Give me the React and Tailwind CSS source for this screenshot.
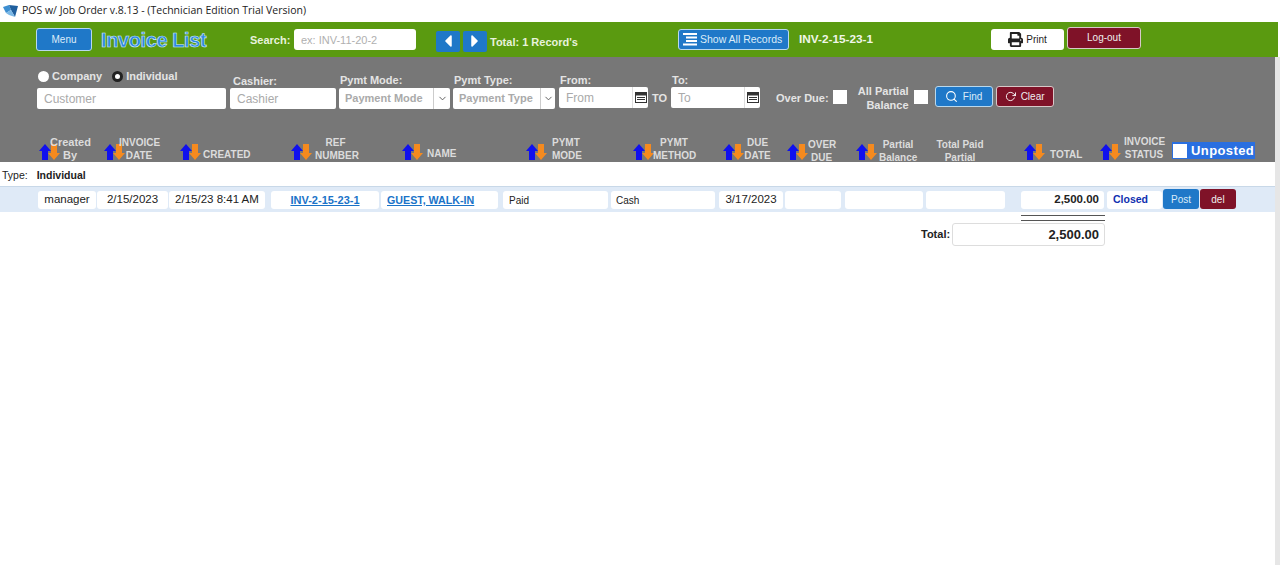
import { FiSearch, FiRotateCw } from "react-icons/fi";
import { FaPrint, FaCaretLeft, FaCaretRight } from "react-icons/fa";
import { LuChevronDown } from "react-icons/lu";

function SortArrows() {
    return (
        <svg width="21" height="17" viewBox="0 0 21 17" className="shrink-0 mb-[1px]">
            <path d="M6 0 L12 7 H9 V16 H3 V7 H0 Z" fill="#1010ee" />
            <path d="M12 0 H18 V9 H21 L15 16 L9 9 H12 Z" fill="#f58a1f" />
        </svg>
    );
}

function Calendar() {
    return (
        <svg width="12" height="11" viewBox="0 0 12 11">
            <rect x="0.5" y="0.5" width="11" height="10" fill="none" stroke="#333" />
            <rect x="0.5" y="0.5" width="11" height="3" fill="#333" />
            <path d="M2 5.5 H10 M2 7.5 H10" stroke="#333" />
        </svg>
    );
}

function ListIcon() {
    return (
        <svg width="15" height="13" viewBox="0 0 15 13" className="shrink-0">
            <path d="M0 0 H14 V2 H0 Z M3 3.5 H14 V5.5 H3 Z M3 7 H14 V9 H3 Z M0 10.5 H14 V12.5 H0 Z" fill="#fff" />
        </svg>
    );
}

function Cell({ w, ml = "ml-0", className = "", children }) {
    return <div className={`${w} ${ml} h-[18px] mt-[1px] bg-white rounded-[3px] flex items-center shrink-0 ${className}`}>{children}</div>;
}

function HeadCol({ w, arrows = true, children }) {
    return (
        <div className={`${w} h-full flex items-end shrink-0`}>
            {arrows && <SortArrows />}
            {children}
        </div>
    );
}

export default function App() {
    return (
        <div className="w-[1280px] h-[565px] overflow-hidden bg-white text-[11px] font-['Liberation_Sans',Arial,sans-serif]">
            <div className="h-[22px] flex items-center pl-[3px] text-[10.5px] text-[#222] font-['Open_Sans',sans-serif]">
                <svg width="15" height="13" viewBox="0 0 15 13" className="mr-[4px]">
                    <path d="M0 2 L6 0 L8 5 L3 8 Z" fill="#3d8fd1" />
                    <path d="M6 0 L15 1 L12 12 L8 5 Z" fill="#1f5f9e" />
                    <path d="M3 8 L8 5 L12 12 L6 10 Z" fill="#7ab8e6" />
                </svg>
                POS w/ Job Order v.8.13 - (Technician Edition Trial Version)
            </div>

            <div className="w-[1278px] h-[35px] bg-[#5a9a10] flex items-center">
                <button className="ml-[36px] w-[56px] h-[23px] rounded-[3px] bg-[#1f78c8] border border-[#b8d8ee] text-[10px] text-[#dcecf8]">Menu</button>
                <div className="ml-[9px] w-[107px] text-[20px] tracking-[-0.4px] leading-none font-bold text-[#2a86e0] [-webkit-text-stroke:0.6px_#d8ecff] whitespace-nowrap">Invoice List</div>
                <div className="ml-[42px] w-[44px] font-bold text-[#e8f2dc] mt-[1px]">Search:</div>
                <input placeholder="ex: INV-11-20-2" className="w-[122px] h-[21px] bg-white rounded-[3px] px-[7px] text-[11px] placeholder-[#b0b0b0]" />
                <button className="ml-[20px] mt-[3px] w-[24px] h-[21px] rounded-[2px] bg-[#1f78c8] flex items-center justify-center text-white text-[20px]"><FaCaretLeft /></button>
                <button className="ml-[3px] mt-[3px] w-[24px] h-[21px] rounded-[2px] bg-[#1f78c8] flex items-center justify-center text-white text-[20px]"><FaCaretRight /></button>
                <div className="ml-[3px] mt-[5px] w-[188px] font-bold text-[#e8f2dc]">Total: 1 Record's</div>
                <button className="w-[111px] h-[21px] rounded-[3px] bg-[#1f78c8] border border-[#b8d8ee] flex items-center pl-[4px] gap-[2px] text-[10.5px] text-[#dcecf8] whitespace-nowrap"><ListIcon />Show All Records</button>
                <div className="ml-[10px] mt-[1px] w-[192px] font-bold text-[#f0f6e8] text-[11.8px]">INV-2-15-23-1</div>
                <button className="w-[73px] h-[21px] -mt-[1px] rounded-[3px] bg-white flex items-center justify-center gap-[3px] text-[10px] text-[#222]"><FaPrint className="text-[15px] text-[#222]" />Print</button>
                <button className="ml-[3px] w-[74px] h-[22px] -mt-[4px] rounded-[3px] bg-[#7f1228] border border-[#d8c8c8] text-[10px] text-[#eee]">Log-out</button>
            </div>

            <div className="flex h-[508px]">
                <div className="w-[1275px] shrink-0">
                    <div className="h-[105px] bg-[#777777] flex flex-col text-[#e4e4e4] font-bold">
                        <div className="h-[56px] flex items-start">
                            <div className="ml-[37px] mt-[12px] w-[189px] flex flex-col shrink-0">
                                <div className="h-[14px] flex items-center pl-[1px] text-[11px]">
                                    <span className="w-[11px] h-[11px] rounded-full bg-white mr-[3px]"></span>
                                    Company
                                    <span className="ml-[10px] w-[11px] h-[11px] rounded-full bg-white border-[3px] border-[#222] mr-[3px]"></span>
                                    Individual
                                </div>
                                <input placeholder="Customer" className="mt-[5px] w-[189px] h-[21px] bg-white rounded-[2px] px-[7px] text-[12px] font-normal placeholder-[#aaa]" />
                            </div>
                            <div className="ml-[4px] mt-[18px] w-[106px] shrink-0">
                                <div className="h-[13px] leading-[13px] pl-[3px]">Cashier:</div>
                                <input placeholder="Cashier" className="w-[106px] h-[21px] bg-white rounded-[2px] px-[7px] text-[12px] font-normal placeholder-[#aaa]" />
                            </div>
                            <div className="ml-[3px] mt-[17px] w-[111px] shrink-0">
                                <div className="h-[14px] leading-[12px] pl-[1px]">Pymt Mode:</div>
                                <div className="h-[21px] bg-white rounded-[2px] flex items-center text-[#aaa] text-[11px] pl-[6px]">
                                    <span className="flex-1 whitespace-nowrap">Payment Mode</span>
                                    <span className="w-[17px] h-full border-l border-[#ccc] flex items-center justify-center text-[#555]"><LuChevronDown /></span>
                                </div>
                            </div>
                            <div className="ml-[3px] mt-[17px] w-[102px] shrink-0">
                                <div className="h-[14px] leading-[12px] pl-[1px]">Pymt Type:</div>
                                <div className="h-[21px] bg-white rounded-[2px] flex items-center text-[#aaa] text-[11px] pl-[6px]">
                                    <span className="flex-1 whitespace-nowrap">Payment Type</span>
                                    <span className="w-[15px] h-full border-l border-[#ccc] flex items-center justify-center text-[#555]"><LuChevronDown /></span>
                                </div>
                            </div>
                            <div className="ml-[4px] mt-[17px] w-[89px] shrink-0">
                                <div className="h-[13px] leading-[12px] pl-[1px]">From:</div>
                                <div className="h-[21px] bg-white rounded-[2px] flex items-center text-[#aaa] text-[12px] font-normal pl-[7px]">
                                    <span className="flex-1">From</span>
                                    <span className="w-[16px] h-full border-l border-[#ddd] flex items-center justify-center"><Calendar /></span>
                                </div>
                            </div>
                            <div className="w-[23px] mt-[35px] text-center shrink-0 leading-[12px]">TO</div>
                            <div className="mt-[17px] w-[89px] shrink-0">
                                <div className="h-[13px] leading-[12px] pl-[1px]">To:</div>
                                <div className="h-[21px] bg-white rounded-[2px] flex items-center text-[#aaa] text-[12px] font-normal pl-[7px]">
                                    <span className="flex-1">To</span>
                                    <span className="w-[16px] h-full border-l border-[#ddd] flex items-center justify-center"><Calendar /></span>
                                </div>
                            </div>
                            <div className="ml-[16px] mt-[35px] leading-[12px] whitespace-nowrap shrink-0">Over Due:</div>
                            <span className="ml-[4px] mt-[33px] w-[14px] h-[14px] bg-white shrink-0"></span>
                            <div className="ml-[10px] mt-[27px] w-[52px] leading-[14px] text-right whitespace-nowrap shrink-0">All Partial<br />Balance</div>
                            <span className="ml-[5px] mt-[33px] w-[14px] h-[14px] bg-white shrink-0"></span>
                            <button className="ml-[7px] mt-[29px] w-[58px] h-[21px] rounded-[3px] bg-[#1f78c8] border border-[#b8d8ee] flex items-center justify-center gap-[5px] text-[10px] font-normal text-[#dcecf8]"><FiSearch className="text-[13px] text-white" />Find</button>
                            <button className="ml-[3px] mt-[29px] w-[58px] h-[21px] rounded-[3px] bg-[#7f1228] border border-[#d8c8c8] flex items-center justify-center gap-[5px] text-[10px] font-normal text-[#eee]"><FiRotateCw className="text-[11px] text-white" />Clear</button>
                        </div>

                        <div className="h-[49px] pl-[39px] flex items-end text-[10px] leading-[13px] text-[#dcdcdc] whitespace-nowrap">
                            <HeadCol w="w-[65px]"><div className="-ml-[10px] w-[40px] text-center text-[11px]">Created<br />By</div></HeadCol>
                            <HeadCol w="w-[76px]"><div className="-ml-[6px] w-[40px] text-center">INVOICE<br />DATE</div></HeadCol>
                            <HeadCol w="w-[111px]"><div className="ml-[2px] pb-[1px]">CREATED</div></HeadCol>
                            <HeadCol w="w-[111px]"><div className="ml-[3px] w-[41px] text-center">REF<br />NUMBER</div></HeadCol>
                            <HeadCol w="w-[124px]"><div className="ml-[4px] pb-[2px]">NAME</div></HeadCol>
                            <HeadCol w="w-[107px]"><div className="ml-[5px]">PYMT<br />MODE</div></HeadCol>
                            <HeadCol w="w-[90px]"><div className="-ml-[1px] w-[42px] text-center">PYMT<br />METHOD</div></HeadCol>
                            <HeadCol w="w-[64px]"><div className="w-[27px] text-center">DUE<br />DATE</div></HeadCol>
                            <HeadCol w="w-[69px]"><div className="w-[27px] text-center -mb-[2px]">OVER<br />DUE</div></HeadCol>
                            <HeadCol w="w-[79px]"><div className="ml-[2px] w-[38px] text-center -mb-[2px]">Partial<br />Balance</div></HeadCol>
                            <HeadCol w="w-[89px]" arrows={false}><div className="w-[50px] text-center -mb-[2px]">Total Paid<br />Partial</div></HeadCol>
                            <HeadCol w="w-[76px]"><div className="ml-[5px] pb-[1px]">TOTAL</div></HeadCol>
                            <HeadCol w="w-[72px]"><div className="ml-[3px] w-[40px] text-center pb-[1px]">INVOICE<br />STATUS</div></HeadCol>
                            <div className="mb-[3px] w-[83px] h-[17px] bg-[#2a6fe0] flex items-center pl-[1px] text-[13px] tracking-[0.4px] text-white shrink-0">
                                <span className="w-[14px] h-[14px] bg-white mr-[4px]"></span>Unposted
                            </div>
                        </div>
                    </div>

                    <div className="h-[25px] flex items-center pl-[2px] pt-[3px] text-[10.5px] text-[#222] border-b border-[#c8d8e8]">
                        Type:<span className="ml-[9px] font-bold">Individual</span>
                    </div>

                    <div className="h-[25px] bg-[#dfeaf7] flex items-center text-[11.5px] text-[#222]">
                        <Cell w="w-[58px]" ml="ml-[38px]" className="justify-center">manager</Cell>
                        <Cell w="w-[71px]" ml="ml-[1px]" className="justify-center">2/15/2023</Cell>
                        <Cell w="w-[96px]" ml="ml-[1px]" className="justify-center">2/15/23 8:41 AM</Cell>
                        <Cell w="w-[108px]" ml="ml-[6px]" className="justify-center font-bold text-[11px] text-[#1a73c8] underline">INV-2-15-23-1</Cell>
                        <Cell w="w-[117px]" ml="ml-[2px]" className="pl-[6px] font-bold text-[10.7px] text-[#1a73c8] underline">GUEST, WALK-IN</Cell>
                        <Cell w="w-[105px]" ml="ml-[5px]" className="pl-[6px] text-[10px]">Paid</Cell>
                        <Cell w="w-[104px]" ml="ml-[3px]" className="pl-[5px] text-[10px]">Cash</Cell>
                        <Cell w="w-[64px]" ml="ml-[4px]" className="justify-center">3/17/2023</Cell>
                        <Cell w="w-[56px]" ml="ml-[2px]" />
                        <Cell w="w-[78px]" ml="ml-[4px]" />
                        <Cell w="w-[79px]" ml="ml-[3px]" />
                        <Cell w="w-[83px]" ml="ml-[16px]" className="justify-end pr-[5px] font-bold">2,500.00</Cell>
                        <Cell w="w-[55px]" ml="ml-[3px]" className="pl-[6px] font-bold text-[#1030b0] text-[10.5px]">Closed</Cell>
                        <button className="ml-[1px] w-[36px] h-[20px] -mt-[1px] rounded-[3px] bg-[#1f78c8] text-[10px] text-[#dcecf8] shrink-0">Post</button>
                        <button className="ml-[1px] w-[36px] h-[20px] -mt-[1px] rounded-[3px] bg-[#7f1228] text-[10px] text-[#eee] shrink-0">del</button>
                    </div>

                    <div className="ml-[1021px] mt-[3px] w-[84px] h-[6px] border-y border-[#555]"></div>

                    <div className="flex items-center mt-[2px] ml-[921px]">
                        <span className="w-[31px] font-bold text-[11px] text-[#222]">Total:</span>
                        <div className="w-[153px] h-[23px] border border-[#ddd] rounded-[3px] flex items-center justify-end pr-[5px] text-[13px] font-bold text-[#222]">2,500.00</div>
                    </div>
                </div>
                <div className="flex-1 bg-[#e6e6e6]"></div>
            </div>
        </div>
    );
}
